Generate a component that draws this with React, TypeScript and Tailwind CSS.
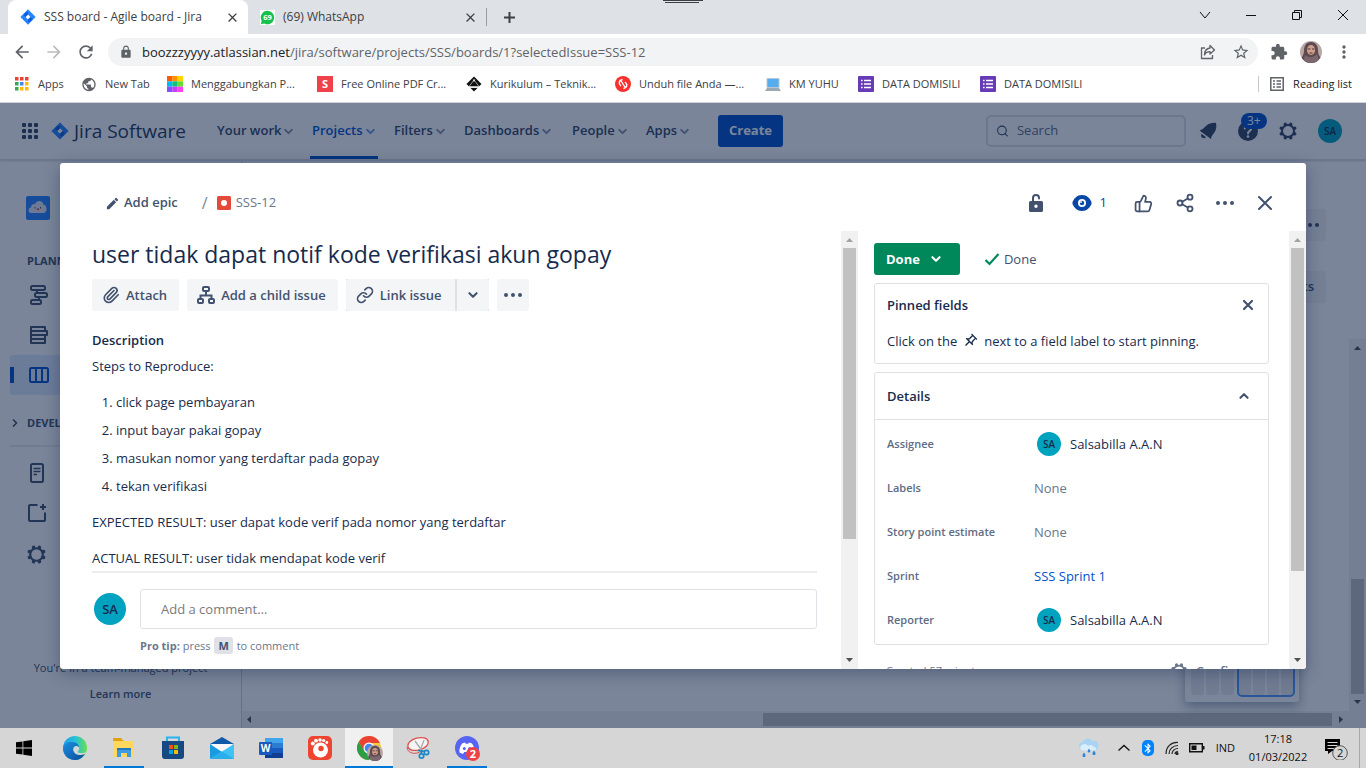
import type { ReactNode } from "react";
import {
  MdArrowBack, MdArrowForward, MdBluetooth, MdClose, MdEdit, MdExtension, MdLock,
  MdMoreVert, MdOutlinePushPin, MdOutlineStarBorder, MdPublic, MdRefresh,
} from "react-icons/md";
import { Link as LinkIcon, Paperclip, Search, Share2, ThumbsUp } from "lucide-react";

/* ---------- shared pieces ---------- */

function Chevron({ className = "", size = 10 }: { className?: string; size?: number }) {
  return (
    <svg width={size} height={size} viewBox="0 0 10 10" fill="none" stroke="currentColor" strokeWidth="1.700" strokeLinecap="round" strokeLinejoin="round" className={className}>
      <path d="M2 3.500 5 6.500 8 3.500" />
    </svg>
  );
}

function Dots() {
  return (
    <svg width="20" height="6" viewBox="0 0 20 6" fill="currentColor">
      <circle cx="3" cy="3" r="2" /><circle cx="10" cy="3" r="2" /><circle cx="17" cy="3" r="2" />
    </svg>
  );
}

function Gear({ size = 20 }: { size?: number }) {
  const teeth = [0, 45, 90, 135, 180, 225, 270, 315];
  return (
    <svg width={size} height={size} viewBox="0 0 20 20" fill="none" stroke="currentColor">
      <circle cx="10" cy="10" r="6" strokeWidth="2" />
      {teeth.map((a) => (
        <path key={a} d="M10 3.200V2.700" strokeWidth="3.400" strokeLinecap="round" transform={`rotate(${a + 22.5} 10 10)`} />
      ))}
    </svg>
  );
}

function JiraMark({ size = 18 }: { size?: number }) {
  return (
    <svg width={size} height={size} viewBox="0 0 18 18">
      <path fill="#2684FF" fillRule="evenodd" d="M9 .4 17.6 9 9 17.6.4 9zM9 6.2 6.2 9 9 11.8 11.8 9z" />
      <path fill="#0F5FDC" d="M9 3.2v3L6.2 9 4 6.8C5 4.600 7 3.500 9 3.200zM9 14.800v-3L11.800 9 14 11.200c-1 2.200-3 3.300-5 3.600z" />
    </svg>
  );
}

function Avatar({ className }: { className: string }) {
  return <span className={`flex shrink-0 items-center justify-center rounded-full bg-[#00A3BF] font-semibold text-[#172B4D] ${className}`}>SA</span>;
}

function Portrait({ size }: { size: number }) {
  return (
    <svg width={size} height={size} viewBox="0 0 22 22">
      <clipPath id={`face-${size}`}><circle cx="11" cy="11" r="11" /></clipPath>
      <g clipPath={`url(#face-${size})`}>
        <path fill="#b9a7a4" d="M0 0h22v22H0z" />
        <path fill="#5e4b52" d="M11 1C6 1 4 5 4 10c0 3-2 6-3 8l4 4h12l4-5c-2-2-3-4-3-8 0-5-3-8-7-8z" />
        <ellipse cx="11" cy="9" rx="4" ry="5" fill="#d0a08e" />
        <path d="M7.500 8h3M12 8h2.500M9.500 12h3" stroke="#5b302c" strokeWidth="1.200" />
        <path fill="#7b6770" d="M5 14c3 3 9 3 12-1l3 9H3z" />
      </g>
    </svg>
  );
}

function VerticalScrollbar({ thumb, atEnd, idleTop }: { thumb: string; atEnd?: boolean; idleTop?: boolean }) {
  return (
    <div className="flex w-[17px] shrink-0 flex-col items-center bg-[#f1f1f1]">
      <svg width="17" height="17" viewBox="0 0 17 17" className="shrink-0"><path d="M5 11h7L8.500 7z" fill={idleTop ? "#a3a3a3" : "#505050"} /></svg>
      <div className={`flex w-[13px] flex-1 flex-col ${atEnd ? "justify-end" : ""}`}>
        <div className={`bg-[#c1c1c1] ${thumb}`} />
      </div>
      <svg width="17" height="17" viewBox="0 0 17 17" className="shrink-0"><path d="M5 6h7l-3.500 4z" fill="#505050" /></svg>
    </div>
  );
}

/* ---------- browser chrome ---------- */

function TabStrip() {
  return (
    <div className="relative flex h-[34px] bg-[#dee1e6] pl-2 text-[12px] text-[#3c4043]">
      <div className="flex w-60 items-center rounded-t-lg bg-white pr-2 pl-3">
        <JiraMark size={16} />
        <span className="flex-1 pl-2 whitespace-nowrap">SSS board - Agile board - Jira</span>
        <button aria-label="Close tab"><MdClose size={15} /></button>
      </div>
      <div className="my-2 flex w-[239px] items-center border-r border-[#9a9da1] pr-2 pl-3">
        <svg width="15" height="15" viewBox="0 0 15 15">
          <path fill="#fff" d="M0 0h15v15H0z" />
          <path fill="#16c14b" d="M7.500.800a6.700 6.700 0 1 1-3.200 12.600L.800 14.200l.900-3.300A6.700 6.700 0 0 1 7.500.800z" />
          <text x="7.500" y="10.200" textAnchor="middle" fontSize="7.500" fontWeight="700" fill="#fff" fontFamily="Open Sans">69</text>
        </svg>
        <span className="flex-1 pl-2">(69) WhatsApp</span>
        <button aria-label="Close tab"><MdClose size={15} /></button>
      </div>
      <button aria-label="New tab" className="px-4">
        <svg width="13" height="13" viewBox="0 0 13 13" stroke="#3c4043" strokeWidth="2"><path d="M6.500 1v11M1 6.500h11" /></svg>
      </button>
      <svg width="42" height="4" viewBox="0 0 42 4" className="absolute top-0 left-1/2 -ml-[21px]" stroke="#3c4043"><path d="M1 .500h40M3 2.500h34" /></svg>
      <div className="ml-auto flex items-center gap-[34px] pr-[17px] pb-1 text-[#111]">
        <button aria-label="Search tabs"><svg width="12" height="12" viewBox="0 0 12 12" fill="none" stroke="currentColor"><path d="m1 3 5 6 5-6" /></svg></button>
        <button aria-label="Minimize"><svg width="12" height="12" viewBox="0 0 12 12" stroke="currentColor"><path d="M1 6.500h10" /></svg></button>
        <button aria-label="Restore"><svg width="12" height="12" viewBox="0 0 12 12" fill="none" stroke="currentColor"><path d="M1.500 3.500h7v7h-7zM3.500 3.500v-2h7v7h-2" /></svg></button>
        <button aria-label="Close"><svg width="12" height="12" viewBox="0 0 12 12" stroke="currentColor"><path d="m1 1 10 10M11 1 1 11" /></svg></button>
      </div>
    </div>
  );
}

function AddressBar() {
  return (
    <div className="flex h-9 items-center bg-white pr-3 pl-3 text-[#5f6368]">
      <button aria-label="Back" className="w-8"><MdArrowBack size={20} /></button>
      <button aria-label="Forward" className="w-8 text-[#babcbe]"><MdArrowForward size={20} /></button>
      <button aria-label="Reload" className="w-8"><MdRefresh size={20} /></button>
      <div className="flex h-7 flex-1 items-center rounded-full bg-[#f1f3f4] pr-2 pl-[11px]">
        <MdLock size={14} />
        <span className="flex-1 pt-px pl-[9px] text-[13px]"><span className="text-[#202124]">boozzzyyyy.atlassian.net</span>/jira/software/projects/SSS/boards/1?selectedIssue=SSS-12</span>
        <button aria-label="Share page" className="w-8">
          <svg width="16" height="16" viewBox="0 0 16 16" fill="none" stroke="currentColor" strokeWidth="1.300" strokeLinejoin="round"><path d="M5 4H1.500v10.500h11V11M10 1.500 14.500 6 10 10V7.700C7.500 7.700 5.500 8.500 4.500 11c0-4 2-6.500 5.500-7z" /></svg>
        </button>
        <button aria-label="Bookmark"><MdOutlineStarBorder size={18} /></button>
      </div>
      <button aria-label="Extensions" className="ml-3"><MdExtension size={18} /></button>
      <button aria-label="Profile" className="ml-3"><Portrait size={22} /></button>
      <button aria-label="Menu" className="ml-3"><MdMoreVert size={20} /></button>
    </div>
  );
}

const appColors = ["#ea4335", "#ea4335", "#ea4335", "#34a853", "#4285f4", "#fbbc04", "#34a853", "#fbbc04", "#fbbc04"];
const mergeColors = ["#ff5a00", "#ff9100", "#ffd500", "#00b8f0", "#10c080", "#60e030", "#8a4cff", "#c040ff", "#ff40f0"];

function DocIcon() {
  return (
    <svg width="16" height="16" viewBox="0 0 16 16"><rect width="16" height="16" rx="1" fill="#673ab7" /><path stroke="#fff" strokeWidth="1.600" d="M3 4.500h1.600M6 4.500h7M3 8h1.600M6 8h7M3 11.500h1.600M6 11.500h7" /></svg>
  );
}

const bookmarks: { label: string; width: string; icon: ReactNode }[] = [
  { label: "Apps", width: "w-[67px]", icon: <svg width="16" height="16" viewBox="0 0 16 16">{appColors.map((c, i) => <rect key={i} x={1 + (i % 3) * 5} y={1 + Math.floor(i / 3) * 5} width="3.500" height="3.500" fill={c} />)}</svg> },
  { label: "New Tab", width: "w-[86px]", icon: <MdPublic size={17} color="#5f6368" /> },
  { label: "Menggabungkan P...", width: "w-[150px]", icon: <svg width="16" height="16" viewBox="0 0 15 15">{mergeColors.map((c, i) => <rect key={i} x={(i % 3) * 5} y={Math.floor(i / 3) * 5} width="5" height="5" fill={c} />)}</svg> },
  { label: "Free Online PDF Cr...", width: "w-[149px]", icon: <span className="flex size-4 items-center justify-center bg-[#f04048] text-[11px] font-bold text-white">S</span> },
  { label: "Kurikulum – Teknik...", width: "w-[149px]", icon: <svg width="16" height="16" viewBox="0 0 16 16"><path d="M8 .500 15.500 8 8 15.500.500 8z" fill="#111" /><path d="M3 10.500h10L8 4z" fill="#111" stroke="#fff" strokeWidth=".600" /><path d="M2 11.300h12" stroke="#fff" strokeWidth="1.200" fill="none" /><path d="M6.800 3.500h2.400L8 6z" fill="#fff" /></svg> },
  { label: "Unduh file Anda —...", width: "w-[150px]", icon: <svg width="16" height="16" viewBox="0 0 16 16"><circle cx="8" cy="8" r="8" fill="#f8312f" /><path d="M7.500 3.500C4 4 3 7.500 6 10M8.500 12.500c3.500-.500 4.500-4 1.500-6.500M5.500 4l5 8" stroke="#fff" strokeWidth="1.400" fill="none" /></svg> },
  { label: "KM YUHU", width: "w-[93px]", icon: <svg width="16" height="16" viewBox="0 0 16 16"><path fill="#55acee" stroke="#b8c8d4" d="M2 2.500h12v9H2z" /><path fill="#9aaab4" d="M2 12h12l2 3H0z" /></svg> },
  { label: "DATA DOMISILI", width: "w-[122px]", icon: <DocIcon /> },
  { label: "DATA DOMISILI", width: "w-[122px]", icon: <DocIcon /> },
];

function BookmarksBar() {
  return (
    <div className="flex h-[33px] items-center border-b border-[#d5d7db] bg-white pr-[14px] pb-1 pl-[14px] text-[11px] text-[#3c4043]">
      {bookmarks.map((b, i) => (
        <a key={i} href="#bookmark" className={`flex shrink-0 items-center gap-2 whitespace-nowrap ${b.width}`}>
          <span className="flex w-4 shrink-0 justify-center">{b.icon}</span>
          {b.label}
        </a>
      ))}
      <button className="ml-auto flex items-center gap-2 border-l border-[#c4c7cb] pl-[10px] whitespace-nowrap text-[#202124]">
        <svg width="16" height="16" viewBox="0 0 16 16" fill="none" stroke="#5f6368" strokeWidth="1.500"><path d="M1.800 1.800h12.400v12.400H1.800z" /><path d="M4 5h2M7.500 5H12M4 8h2M7.500 8H12M4 11h2M7.500 11H12" /></svg>
        Reading list
      </button>
    </div>
  );
}

/* ---------- Jira page behind the dialog ---------- */

const navItems = [
  { label: "Your work", width: "w-[95px]" },
  { label: "Projects", width: "w-[82px]", active: true },
  { label: "Filters", width: "w-[70px]" },
  { label: "Dashboards", width: "w-[108px]" },
  { label: "People", width: "w-[74px]" },
  { label: "Apps", width: "w-[72px]" },
];

function JiraHeader() {
  return (
    <header className="flex h-[57px] shrink-0 items-center border-b border-[#dfe1e6] bg-white pr-6 pl-[21px] text-[#344563] shadow-[0_1px_2px_rgba(9,30,66,0.2)]">
      <button aria-label="App switcher">
        <svg width="18" height="18" viewBox="0 0 18 18" fill="currentColor">
          {[0, 1, 2].map((r) => [0, 1, 2].map((c) => <rect key={`${r}${c}`} x={1 + c * 6} y={1 + r * 6} width="4" height="4" rx="1" />))}
        </svg>
      </button>
      <a href="#home" className="flex w-[178px] items-center gap-[5px] pl-3 text-[19px] whitespace-nowrap text-[#253858]"><JiraMark />Jira Software</a>
      <nav className="flex h-full">
        {navItems.map((n) => (
          <div key={n.label} className={`flex shrink-0 ${n.width}`}>
            <button className={`-ml-[2px] flex items-center gap-[2px] border-y-[3px] border-t-transparent px-[2px] text-[13px] font-semibold whitespace-nowrap ${n.active ? "border-b-[#0052CC] text-[#0052CC]" : "border-b-transparent"}`}>
              {n.label}<Chevron className="opacity-60" size={11} />
            </button>
          </div>
        ))}
      </nav>
      <button className="h-8 rounded-[3px] bg-[#0052CC] px-[11px] text-[13px] font-bold text-white">Create</button>
      <div className="ml-auto flex items-center">
        <label className="flex h-8 w-[200px] items-center rounded-[5px] border-2 border-[#dfe1e6] px-2">
          <Search size={14} />
          <input aria-label="Search" placeholder="Search" className="w-full bg-transparent pl-2 text-[13px] outline-none placeholder:text-[#5e6c84]" />
        </label>
        <button aria-label="Notifications" className="ml-3">
          <svg width="20" height="20" viewBox="0 0 20 20" fill="currentColor"><path d="M18 2c.600 3 .400 6-1 8.500L13.500 15.500l-.500 2.500L1.500 9.500l3-1.200L8.500 4.500C11 2.500 15 1.500 18 2z" /><path d="M3.500 12.800l4.500 3.400c-2.500 2.600-6 0-4.500-3.400z" /></svg>
        </button>
        <button aria-label="Help" className="relative ml-5">
          <svg width="20" height="20" viewBox="0 0 20 20"><circle cx="10" cy="10" r="10" fill="currentColor" /><path d="M6.800 7.500c0-4 6.500-4 6.500 0 0 2.500-3.300 2.300-3.300 5" stroke="#fff" strokeWidth="2" fill="none" strokeLinecap="round" /><circle cx="10" cy="15.500" r="1.300" fill="#fff" /></svg>
          <span className="absolute -top-2 left-[3px] h-4 rounded-full bg-[#0052CC] px-[6px] text-[12px] leading-4 text-white">3+</span>
        </button>
        <button aria-label="Settings" className="ml-5"><Gear /></button>
        <button aria-label="Account" className="ml-5"><Avatar className="size-6 text-[10px]" /></button>
      </div>
    </header>
  );
}

function SideItem({ label, selected, children }: { label: string; selected?: boolean; children: ReactNode }) {
  return (
    <a href="#view" aria-label={label} className={`flex h-10 items-center rounded-[3px] pl-[18px] ${selected ? "relative bg-[#DEEBFF] text-[#0052CC]" : ""}`}>
      {selected && <span className="absolute left-0 h-4 w-1 bg-[#0052CC]" />}
      {children}
    </a>
  );
}

function Sidebar() {
  return (
    <aside className="flex w-[242px] shrink-0 flex-col border-r border-[#cfd3da] px-[10px] text-[#42526E]">
      <div className="pt-9 pl-4">
        <svg width="24" height="24" viewBox="0 0 24 24"><rect width="24" height="24" rx="2" fill="#2684FF" /><path d="M5 17c-3.500-.500-3-5 0-5.500 0-3 2.500-3.800 4-3.300C10.500 4 16.500 4 17.500 8.500c3.500 1 4.500 7 .500 8.500z" fill="#e3e6f3" /><path d="M9 11v1.500M14.500 11v1.500" stroke="#42526E" /><ellipse cx="12" cy="13.300" rx="1.300" ry="1" fill="#e5493a" /></svg>
      </div>
      <h2 className="mt-8 mb-[5px] pl-[17px] text-[11px] leading-[18px] font-bold">PLANNING</h2>
      <SideItem label="Roadmap">
        <svg width="22" height="22" viewBox="0 0 22 22" fill="none" stroke="currentColor" strokeWidth="2"><rect x="3" y="2" width="14" height="4" rx="1.500" /><rect x="7" y="9" width="12" height="4" rx="1.500" /><rect x="3" y="16" width="10" height="4" rx="1.500" /><path d="M9 6v3M11 13v3" /></svg>
      </SideItem>
      <SideItem label="Backlog">
        <svg width="22" height="22" viewBox="0 0 22 22" fill="none" stroke="currentColor" strokeWidth="2" strokeLinejoin="round"><path d="M3 7V3h14v4M3 11v8h14v-8M3 15h14M3 7h16v4H3z" /></svg>
      </SideItem>
      <SideItem label="Board" selected>
        <svg width="22" height="22" viewBox="0 0 22 22" fill="none" stroke="currentColor" strokeWidth="2"><rect x="2" y="4" width="18" height="14" rx="1.500" /><path d="M8 4v14M14 4v14" /></svg>
      </SideItem>
      <h2 className="mt-[19px] flex items-center gap-[7px] text-[11px] leading-[18px] font-bold"><Chevron className="-rotate-90" />DEVELOPMENT</h2>
      <hr className="mt-[13px] mb-[6px] border-t-2 border-[#ebecf0]" />
      <div className="flex flex-col pl-4">
        <a href="#pages" aria-label="Project pages" className="flex h-10 items-center"><svg width="22" height="22" viewBox="0 0 22 22" fill="none" stroke="currentColor" strokeWidth="2"><rect x="5" y="2" width="12" height="18" rx="1.500" /><path d="M7.500 6.500h7M7.500 9.500h7M7.500 12.500h3.500" strokeWidth="1.500" /></svg></a>
        <a href="#shortcut" aria-label="Add shortcut" className="flex h-10 items-center"><svg width="22" height="22" viewBox="0 0 22 22" fill="none" stroke="currentColor" strokeWidth="2"><path d="M11.500 3H4a1 1 0 0 0-1 1v14a1 1 0 0 0 1 1h14a1 1 0 0 0 1-1v-7.500M17 2v6M14 5h6" /></svg></a>
        <a href="#settings" aria-label="Project settings" className="flex h-[42px] items-center"><Gear size={21} /></a>
      </div>
      <div className="mt-auto flex flex-col items-center gap-[10px] pb-[26px] text-[11px] leading-4 whitespace-nowrap">
        <span>You're in a team-managed project</span>
        <a href="#learn" className="font-semibold">Learn more</a>
      </div>
    </aside>
  );
}

function Board() {
  return (
    <main className="flex min-w-0 flex-1 flex-col">
      <div className="flex h-[179px] shrink-0 flex-col items-end gap-[30px] pt-[49px] pr-10 text-[#42526E]">
        <button aria-label="Board actions" className="flex h-8 items-center rounded-[3px] bg-[#f4f5f7] px-[6px]"><Dots /></button>
        <button className="h-8 rounded-[3px] bg-[#f4f5f7] px-3 text-[13px] font-semibold">Insights</button>
      </div>
      <div className="relative flex min-h-0 flex-1">
        <div className="flex-1" />
        <VerticalScrollbar thumb="h-[34%]" atEnd />
        <div className="absolute right-[67px] bottom-[9px] flex h-14 gap-[2px] rounded-[3px] bg-white p-[6px] pt-2 pb-[7px] shadow-[0_4px_12px_rgba(9,30,66,0.4)]">
          {[0, 1, 2].map((i) => <span key={i} className="w-[13px] rounded-[3px] bg-[#ebecf0]" />)}
          <span className="ml-[3px] flex gap-[2px] rounded-[3px] outline-2 outline-[#4C9AFF]">
            {[0, 1, 2, 3].map((i) => <span key={i} className="w-3 rounded-[3px] bg-[#ebecf0]" />)}
          </span>
        </div>
      </div>
      <div className="flex h-[17px] items-center bg-[#f1f1f1] pr-[17px]">
        <svg width="17" height="17" viewBox="0 0 17 17"><path d="M9 5v7L5 8.500z" fill="#505050" /></svg>
        <div className="flex h-[13px] flex-1 justify-end"><div className="w-[53%] bg-[#c1c1c1]" /></div>
        <svg width="17" height="17" viewBox="0 0 17 17"><path d="M7 5v7l4-3.500z" fill="#505050" /></svg>
      </div>
    </main>
  );
}

/* ---------- issue dialog ---------- */

function DialogHeader() {
  return (
    <div className="flex h-[68px] shrink-0 items-center pt-3 pr-8 pl-[45px] text-[#42526E]">
      <button className="flex items-center gap-1 text-[13px] font-semibold"><MdEdit size={15} />Add epic</button>
      <span className="pr-[9px] pl-6 text-[#7a869a]">/</span>
      <a href="#issue" className="flex items-center gap-[5px] text-[13px] text-[#6B778C]">
        <svg width="14" height="14" viewBox="0 0 14 14"><rect width="14" height="14" rx="1.500" fill="#E5493A" /><circle cx="7" cy="7" r="3" fill="#fff" /></svg>
        SSS-12
      </a>
      <div className="ml-auto flex items-center">
        <button aria-label="Unlock" className="mr-7">
          <svg width="16" height="20" viewBox="0 0 16 20"><path d="M5 9V5a3 3 0 0 1 6 0v.500" fill="none" stroke="currentColor" strokeWidth="2" strokeLinecap="round" /><path fill="currentColor" fillRule="evenodd" d="M2.500 8h11a1.500 1.500 0 0 1 1.500 1.500v8a1.500 1.500 0 0 1-1.500 1.500h-11A1.500 1.500 0 0 1 1 17.500v-8A1.500 1.500 0 0 1 2.500 8zM8 11.500a1.700 1.700 0 1 0 0 3.400 1.700 1.700 0 0 0 0-3.400z" /></svg>
        </button>
        <button className="mr-[27px] flex items-center gap-2 text-[13px] text-[#0747A6]">
          <svg width="20" height="18" viewBox="0 0 20 18"><path d="M10 1c5 0 8 3.500 9.500 7v2C18 13.500 15 17 10 17S2 13.500.500 10V8C2 4.500 5 1 10 1z" fill="currentColor" /><circle cx="10" cy="9" r="4" fill="#fff" /><circle cx="10" cy="9" r="2.200" fill="currentColor" /><circle cx="9" cy="8" r=".900" fill="#fff" /></svg>
          1
        </button>
        <button aria-label="Vote" className="mr-[22px]"><ThumbsUp size={19} strokeWidth={2.2} /></button>
        <button aria-label="Share" className="mr-5"><Share2 size={20} strokeWidth={2.2} /></button>
        <button aria-label="Actions" className="mr-[21px]"><Dots /></button>
        <button aria-label="Close"><svg width="18" height="18" viewBox="0 0 18 18" stroke="currentColor" strokeWidth="2" strokeLinecap="round"><path d="m3 3 12 12M15 3 3 15" /></svg></button>
      </div>
    </div>
  );
}

const quickButton = "flex h-8 items-center gap-[6px] rounded-[3px] bg-[#f4f5f7] pl-[10px] pr-3";

function IssueBody() {
  return (
    <section className="flex min-w-0 flex-1">
      <div className="flex min-w-0 flex-1 flex-col pr-6 pl-8 text-[13px] leading-5 text-[#172B4D]">
        <h1 className="h-12 shrink-0 text-[23px] leading-[46px] font-medium whitespace-nowrap">user tidak dapat notif kode verifikasi akun gopay</h1>
        <div className="flex shrink-0 gap-2 font-semibold text-[#42526E]">
          <button className={quickButton}><Paperclip size={18} strokeWidth={2.2} />Attach</button>
          <button className={quickButton}>
            <svg width="18" height="18" viewBox="0 0 18 18" fill="none" stroke="currentColor" strokeWidth="2"><rect x="6" y="1" width="6" height="4" rx="1" /><rect x="1" y="13" width="5" height="4" rx="1" /><rect x="12" y="13" width="5" height="4" rx="1" /><path d="M9 5v4M3.500 13V9.500h11V13" /></svg>
            Add a child issue
          </button>
          <div className="flex gap-[2px] bg-[#dfe1e6]">
            <button className="flex h-8 items-center gap-[6px] rounded-l-[3px] bg-[#f4f5f7] pr-[13px] pl-[10px]"><LinkIcon size={18} strokeWidth={2.2} />Link issue</button>
            <button aria-label="More link options" className="flex h-8 w-8 items-center justify-center rounded-r-[3px] bg-[#f4f5f7]"><Chevron size={12} /></button>
          </div>
          <button aria-label="More" className="flex h-8 w-8 items-center justify-center rounded-[3px] bg-[#f4f5f7]"><Dots /></button>
        </div>
        <div className="min-h-0 flex-1 overflow-hidden pt-[19px]">
          <h2 className="font-semibold">Description</h2>
          <p className="mt-[6px]">Steps to Reproduce:</p>
          <ol className="mt-4 flex list-decimal flex-col gap-2 pl-6">
            <li>click page pembayaran</li>
            <li>input bayar pakai gopay</li>
            <li>masukan nomor yang terdaftar pada gopay</li>
            <li>tekan verifikasi</li>
          </ol>
          <p className="mt-4">EXPECTED RESULT: user dapat kode verif pada nomor yang terdaftar</p>
          <p className="mt-4">ACTUAL RESULT: user tidak mendapat kode verif</p>
        </div>
        <div className="flex shrink-0 gap-[14px] border-t-2 border-[#ebecf0] pt-4 pb-[14px] pl-[2px]">
          <Avatar className="mt-1 size-8 text-[13px]" />
          <div className="flex-1">
            <input aria-label="Add a comment" placeholder="Add a comment…" className="h-10 w-full rounded-[3px] border border-[#dfe1e6] px-5 outline-none placeholder:text-[#7a7a7a]" />
            <p className="mt-2 text-[11px] leading-[18px] text-[#6B778C]"><b>Pro tip:</b> press <kbd className="mx-px rounded-[3px] bg-[#dfe1e6] px-1 py-px font-['Open_Sans',sans-serif] font-bold text-[#42526E]">M</kbd> to comment</p>
          </div>
        </div>
      </div>
      <VerticalScrollbar thumb="h-[72%]" idleTop />
    </section>
  );
}

function Person() {
  return <span className="flex items-center gap-[9px] pl-[3px]"><Avatar className="size-6 text-[10px]" />Salsabilla A.A.N</span>;
}

const fields: { label: string; value: ReactNode }[] = [
  { label: "Assignee", value: <Person /> },
  { label: "Labels", value: <span className="text-[#6B778C]">None</span> },
  { label: "Story point estimate", value: <span className="text-[#6B778C]">None</span> },
  { label: "Sprint", value: <a href="#sprint" className="text-[#0052CC]">SSS Sprint 1</a> },
  { label: "Reporter", value: <Person /> },
];

function IssueSide() {
  return (
    <section className="flex w-[448px] shrink-0">
      <div className="flex min-w-0 flex-1 flex-col gap-2 overflow-hidden pt-3 pr-5 pl-4 text-[13px] leading-5 text-[#172B4D]">
        <div className="flex shrink-0 items-center gap-6">
          <button className="flex h-8 items-center gap-[10px] rounded-[3px] bg-[#00875A] pr-[18px] pl-3 font-bold text-white">Done<Chevron size={12} /></button>
          <span className="flex items-center gap-1 text-[#42526E]">
            <svg width="16" height="16" viewBox="0 0 16 16" fill="none" stroke="#00875A" strokeWidth="2.200"><path d="m1.500 9 4 4L14.500 3" /></svg>Done
          </span>
        </div>
        <div className="shrink-0 rounded-[3px] border border-[#dfe1e6] px-3 pt-[11px] pb-3">
          <div className="flex items-center justify-between font-semibold">Pinned fields
            <button aria-label="Dismiss" className="text-[#42526E]"><svg width="16" height="16" viewBox="0 0 16 16" stroke="currentColor" strokeWidth="2.200" strokeLinecap="round"><path d="m4 4 8 8M12 4l-8 8" /></svg></button>
          </div>
          <p className="mt-4 flex items-center whitespace-nowrap">Click on the <MdOutlinePushPin size={16} className="mr-[6px] ml-[5px] rotate-45" /> next to a field label to start pinning.</p>
        </div>
        <div className="shrink-0 rounded-[3px] border border-[#dfe1e6]">
          <div className="flex h-[47px] items-center justify-between border-b border-[#dfe1e6] pr-[18px] pl-3 font-semibold">Details
            <button aria-label="Collapse details" className="text-[#42526E]"><Chevron size={12} className="rotate-180" /></button>
          </div>
          <dl className="pt-[2px] pb-[2px]">
            {fields.map((f) => (
              <div key={f.label} className="flex h-11 items-center pl-3">
                <dt className="w-[147px] text-[11px] font-semibold text-[#5E6C84]">{f.label}</dt>
                <dd>{f.value}</dd>
              </div>
            ))}
          </dl>
        </div>
        <div className="flex shrink-0 items-center justify-between pt-2 pr-3 pl-3 text-[11px] leading-5 text-[#6B778C]">
          Created 57 minutes ago
          <button className="flex items-center gap-2 text-[13px] leading-5 font-semibold"><Gear size={18} />Configure</button>
        </div>
      </div>
      <VerticalScrollbar thumb="h-[80%]" idleTop />
    </section>
  );
}

/* ---------- taskbar ---------- */

const Windows = <svg width="16" height="16" viewBox="0 0 16 16" fill="#000"><path d="M0 2.300 6.500 1.400v6.200H0zM7.300 1.300 16 0v7.600H7.300zM0 8.400h6.500v6.200L0 13.700zM7.300 8.400H16V16l-8.700-1.300z" /></svg>;

const Edge = (
  <svg width="24" height="24" viewBox="0 0 24 24">
    <defs>
      <linearGradient id="edgeTop" x1="0" x2="1"><stop stopColor="#1ca0e8" /><stop offset=".5" stopColor="#25c0dc" /><stop offset="1" stopColor="#66e04e" /></linearGradient>
      <linearGradient id="edgeLow" x1="0" y1="0" x2="1" y2="1"><stop stopColor="#1b8fe0" /><stop offset="1" stopColor="#0c4a9a" /></linearGradient>
    </defs>
    <circle cx="12" cy="12" r="12" fill="url(#edgeTop)" />
    <path fill="url(#edgeLow)" d="M0 12C1 7 5 6 9 6c5 0 7 3 7 6-1-2-5-3-6 0-1 4 3 8 12 5.500C19 23 15 24 12 24 5 24 0 19 0 12z" />
    <path fill="#d6d6d6" d="M24 14c-1 3-4 3.500-7 3-2 0-3-1-2-2 2-2 1.500-4-1-5 -2 0-4 2-3.500 4.500C11.500 19 17 20 22 18z" />
  </svg>
);

const Explorer = <svg width="22" height="22" viewBox="0 0 22 22"><path fill="#e0a010" d="M0 1h8l2 2.500h1V6H0z" /><path fill="#ffd75e" d="M0 4h21v16H0z" /><path fill="#3f9be0" d="M4 11h14v9h-4v-4H8v4H4z" /><path fill="#2478bd" d="M4 11h14v2H4z" /></svg>;

const Store = <svg width="24" height="24" viewBox="0 0 24 24"><path fill="none" stroke="#29b4f0" strokeWidth="2" d="M6 6V1.500h12V6" /><path fill="#16497f" d="M1 5h22v15a3 3 0 0 1-3 3H4a3 3 0 0 1-3-3z" /><path fill="#f25022" d="M8 9h4v4H8z" /><path fill="#7fba00" d="M13 9h4v4h-4z" /><path fill="#00a4ef" d="M8 14h4v4H8z" /><path fill="#ffb900" d="M13 14h4v4h-4z" /></svg>;

const Mail = <svg width="24" height="24" viewBox="0 0 24 24"><path fill="#0f5aa8" d="M0 8 12 1l12 7z" /><path fill="#f6f8fa" d="M2 8h20v9H2z" /><path fill="#1a9be0" d="M0 8l12 8-12 7z" /><path fill="#3fc3f5" d="m24 8-24 15h24z" /><path fill="#2aaeea" d="m12 15.500 12 7.500H0z" /></svg>;

const Word = <svg width="24" height="24" viewBox="0 0 24 24"><path fill="#41a5ee" d="M6 2h18v5H6z" /><path fill="#2b7cd3" d="M6 7h18v5H6z" /><path fill="#185abd" d="M6 12h18v5H6z" /><path fill="#103f91" d="M6 17h18v5H6z" /><rect y="6" width="13" height="13" rx="1" fill="#185abd" /><text x="6.500" y="16" textAnchor="middle" fontSize="10" fontWeight="700" fill="#fff" fontFamily="Open Sans">W</text></svg>;

const Gom = <svg width="24" height="24" viewBox="0 0 24 24"><rect width="24" height="24" rx="5" fill="#ee4430" /><circle cx="12.500" cy="14" r="7.500" fill="#fff" /><circle cx="13" cy="12.500" r="2.700" fill="#ee4430" /><g fill="#fff"><circle cx="4.800" cy="7.500" r="2" /><circle cx="8" cy="4.700" r="1.900" /><circle cx="12" cy="4" r="1.800" /><circle cx="15.700" cy="4.500" r="1.600" /><circle cx="18.800" cy="6.500" r="1.400" /></g></svg>;

const Chrome = (
  <span className="relative flex">
    <svg width="24" height="24" viewBox="0 0 24 24"><circle cx="12" cy="12" r="12" fill="#fcc934" /><path fill="#ea4335" d="M12 12V7h10.900A12 12 0 0 0 1.600 6L7 15z" /><path fill="#2d9d48" d="M1.600 6A12 12 0 0 0 12 24l4.500-8H8z" /><circle cx="12" cy="12" r="5.500" fill="#fff" /><circle cx="12" cy="12" r="4.300" fill="#4285f4" /></svg>
    <span className="absolute top-[9px] left-[10px]"><Portrait size={16} /></span>
  </span>
);

const Snip = <svg width="24" height="24" viewBox="0 0 24 24" fill="none"><ellipse cx="12" cy="8" rx="10.500" ry="6" transform="rotate(-15 12 8)" fill="#f4f4f4" stroke="#e05050" strokeWidth="1.300" /><path d="M1 11c0 7 10 8 14 4" stroke="#e05050" /><path d="M9 5l8 11M18 4l-4 11" stroke="#aaa" strokeWidth="1.300" /><circle cx="15.500" cy="20" r="2.200" stroke="#1c86c8" strokeWidth="1.700" /><circle cx="20.500" cy="16.500" r="2.200" stroke="#1c86c8" strokeWidth="1.700" /><path d="M12 14.500l7 1M15 18l1-4" stroke="#1c86c8" strokeWidth="1.700" /></svg>;

const Discord = (
  <span className="relative flex">
    <svg width="24" height="24" viewBox="0 0 24 24"><circle cx="12" cy="12" r="12" fill="#5865f2" /><path fill="#fff" d="M7 7.500 10 6.500l.7 1.200h2.600L14 6.500l3 1c2 3 3 6 2.500 9l-3.500 1.500-1.200-2h-5.600l-1.200 2L4.500 16.500C4 13.500 5 10.500 7 7.500z" /><circle cx="9.300" cy="12.500" r="1.500" fill="#5865f2" /><circle cx="14.700" cy="12.500" r="1.500" fill="#5865f2" /></svg>
    <span className="absolute top-[11px] left-[11px] flex size-[14px] items-center justify-center rounded-full bg-[#ed4245] text-[11px] font-bold text-white">2</span>
  </span>
);

const tasks: { name: string; icon: ReactNode; bar?: string; active?: boolean }[] = [
  { name: "Edge", icon: Edge },
  { name: "File Explorer", icon: Explorer, bar: "w-10" },
  { name: "Store", icon: Store },
  { name: "Mail", icon: Mail },
  { name: "Word", icon: Word },
  { name: "GOM", icon: Gom },
  { name: "Chrome", icon: Chrome, bar: "w-12", active: true },
  { name: "Snipping Tool", icon: Snip },
  { name: "Discord", icon: Discord, bar: "w-10" },
];

function Taskbar() {
  return (
    <footer className="flex h-10 shrink-0 items-center bg-[#d6d6d6] text-[11px] text-[#111]">
      <button aria-label="Start" className="mr-[3px] flex w-12 justify-center">{Windows}</button>
      <div className="flex h-full gap-px">
        {tasks.map((t) => (
          <button key={t.name} aria-label={t.name} className={`relative flex w-12 items-center justify-center ${t.active ? "bg-[#f0f0f0]" : ""}`}>
            {t.icon}
            {t.bar && <span className={`absolute bottom-0 h-[2px] bg-[#0078d7] ${t.bar}`} />}
          </button>
        ))}
      </div>
      <div className="ml-auto flex h-full items-center">
        <svg width="22" height="22" viewBox="0 0 22 22"><path d="M5 13a4 4 0 0 1 0-8c1-4 7-5 9-1 5-1 8 3 6 7-1 2-3 2.500-4 2.500z" fill="#a8d4f2" /><path d="M4 8c2-2 5-1 6 1 2-2 5-1 6 1 3 0 3 3.500 0 3.500H5C1 13 2 9 4 8z" fill="#d8eefb" /><g fill="#2e86d8"><path d="M6 15.500c2 2.500 2 4.500 0 4.500s-2-2 0-4.500zM11 11.500c1.800 2.500 1.800 4 0 4s-1.800-1.500 0-4zM16 13.500c2 2.500 2 4.500 0 4.500s-2-2 0-4.500z" /></g></svg>
        <button aria-label="Show hidden icons" className="ml-[17px]"><svg width="14" height="14" viewBox="0 0 14 14" fill="none" stroke="#111" strokeWidth="1.300"><path d="m1.500 9.500 5.500-5 5.500 5" /></svg></button>
        <span className="ml-[11px] flex h-4 w-3 items-center justify-center rounded-[5px] bg-[#0082fc] text-white"><MdBluetooth size={13} /></span>
        <svg width="14" height="14" viewBox="0 0 14 14" fill="none" stroke="#222" strokeWidth="1.200" className="ml-[11px]"><path d="M1 13C1 6 6 1 13 1.500M4 13c0-5 4-8.500 9-8.500M7 13c0-3 2.500-5.500 6-5.500M10 13c0-1.500 1-2.500 3-2.500" /><circle cx="12" cy="12.500" r="1" fill="#222" /></svg>
        <svg width="16" height="12" viewBox="0 0 16 12" className="ml-[10px]"><path d="M.700 1.700h12.600v8H.700z" fill="none" stroke="#111" strokeWidth="1.400" /><path fill="#111" d="M2.500 3.500h5v4.500h-5zM14 4h1.500v3.500H14z" /></svg>
        <span className="ml-[11px]">IND</span>
        <div className="ml-3 w-[62px] text-center leading-[18px] whitespace-nowrap"><div>17:18</div><div>01/03/2022</div></div>
        <button aria-label="Notifications" className="relative ml-[15px] flex size-6">
          <svg width="24" height="24" viewBox="0 0 24 24"><path fill="#000" d="M1 3h15v12H8l-4 3v-3H1z" /><path d="M3.500 6.500h10M3.500 9.500h10M3.500 12.500h7" stroke="#d6d6d6" strokeWidth="1.200" /><circle cx="16" cy="17" r="7.300" fill="#d6d6d6" stroke="#555" /></svg>
          <span className="absolute top-[9px] left-[13px] text-[11px] leading-4">2</span>
        </button>
        <span className="ml-[11px] h-full w-[7px] border-l border-[#a8a8a8]" />
      </div>
    </footer>
  );
}

export default function App() {
  return (
    <div className="flex h-screen flex-col overflow-hidden font-['Open_Sans','Noto_Sans',sans-serif]">
      <TabStrip />
      <AddressBar />
      <BookmarksBar />
      <div className="relative flex min-h-0 flex-1 flex-col bg-white">
        <JiraHeader />
        <div className="flex min-h-0 flex-1">
          <Sidebar />
          <Board />
        </div>
        <div className="absolute inset-0 flex bg-[#091e42]/54 p-[60px] pb-[59px]">
          <div role="dialog" aria-label="SSS-12" className="flex min-w-0 flex-1 flex-col overflow-hidden rounded-[3px] bg-white shadow-[0_4px_16px_rgba(9,30,66,0.35)]">
            <DialogHeader />
            <div className="flex min-h-0 flex-1">
              <IssueBody />
              <IssueSide />
            </div>
          </div>
        </div>
      </div>
      <Taskbar />
    </div>
  );
}
